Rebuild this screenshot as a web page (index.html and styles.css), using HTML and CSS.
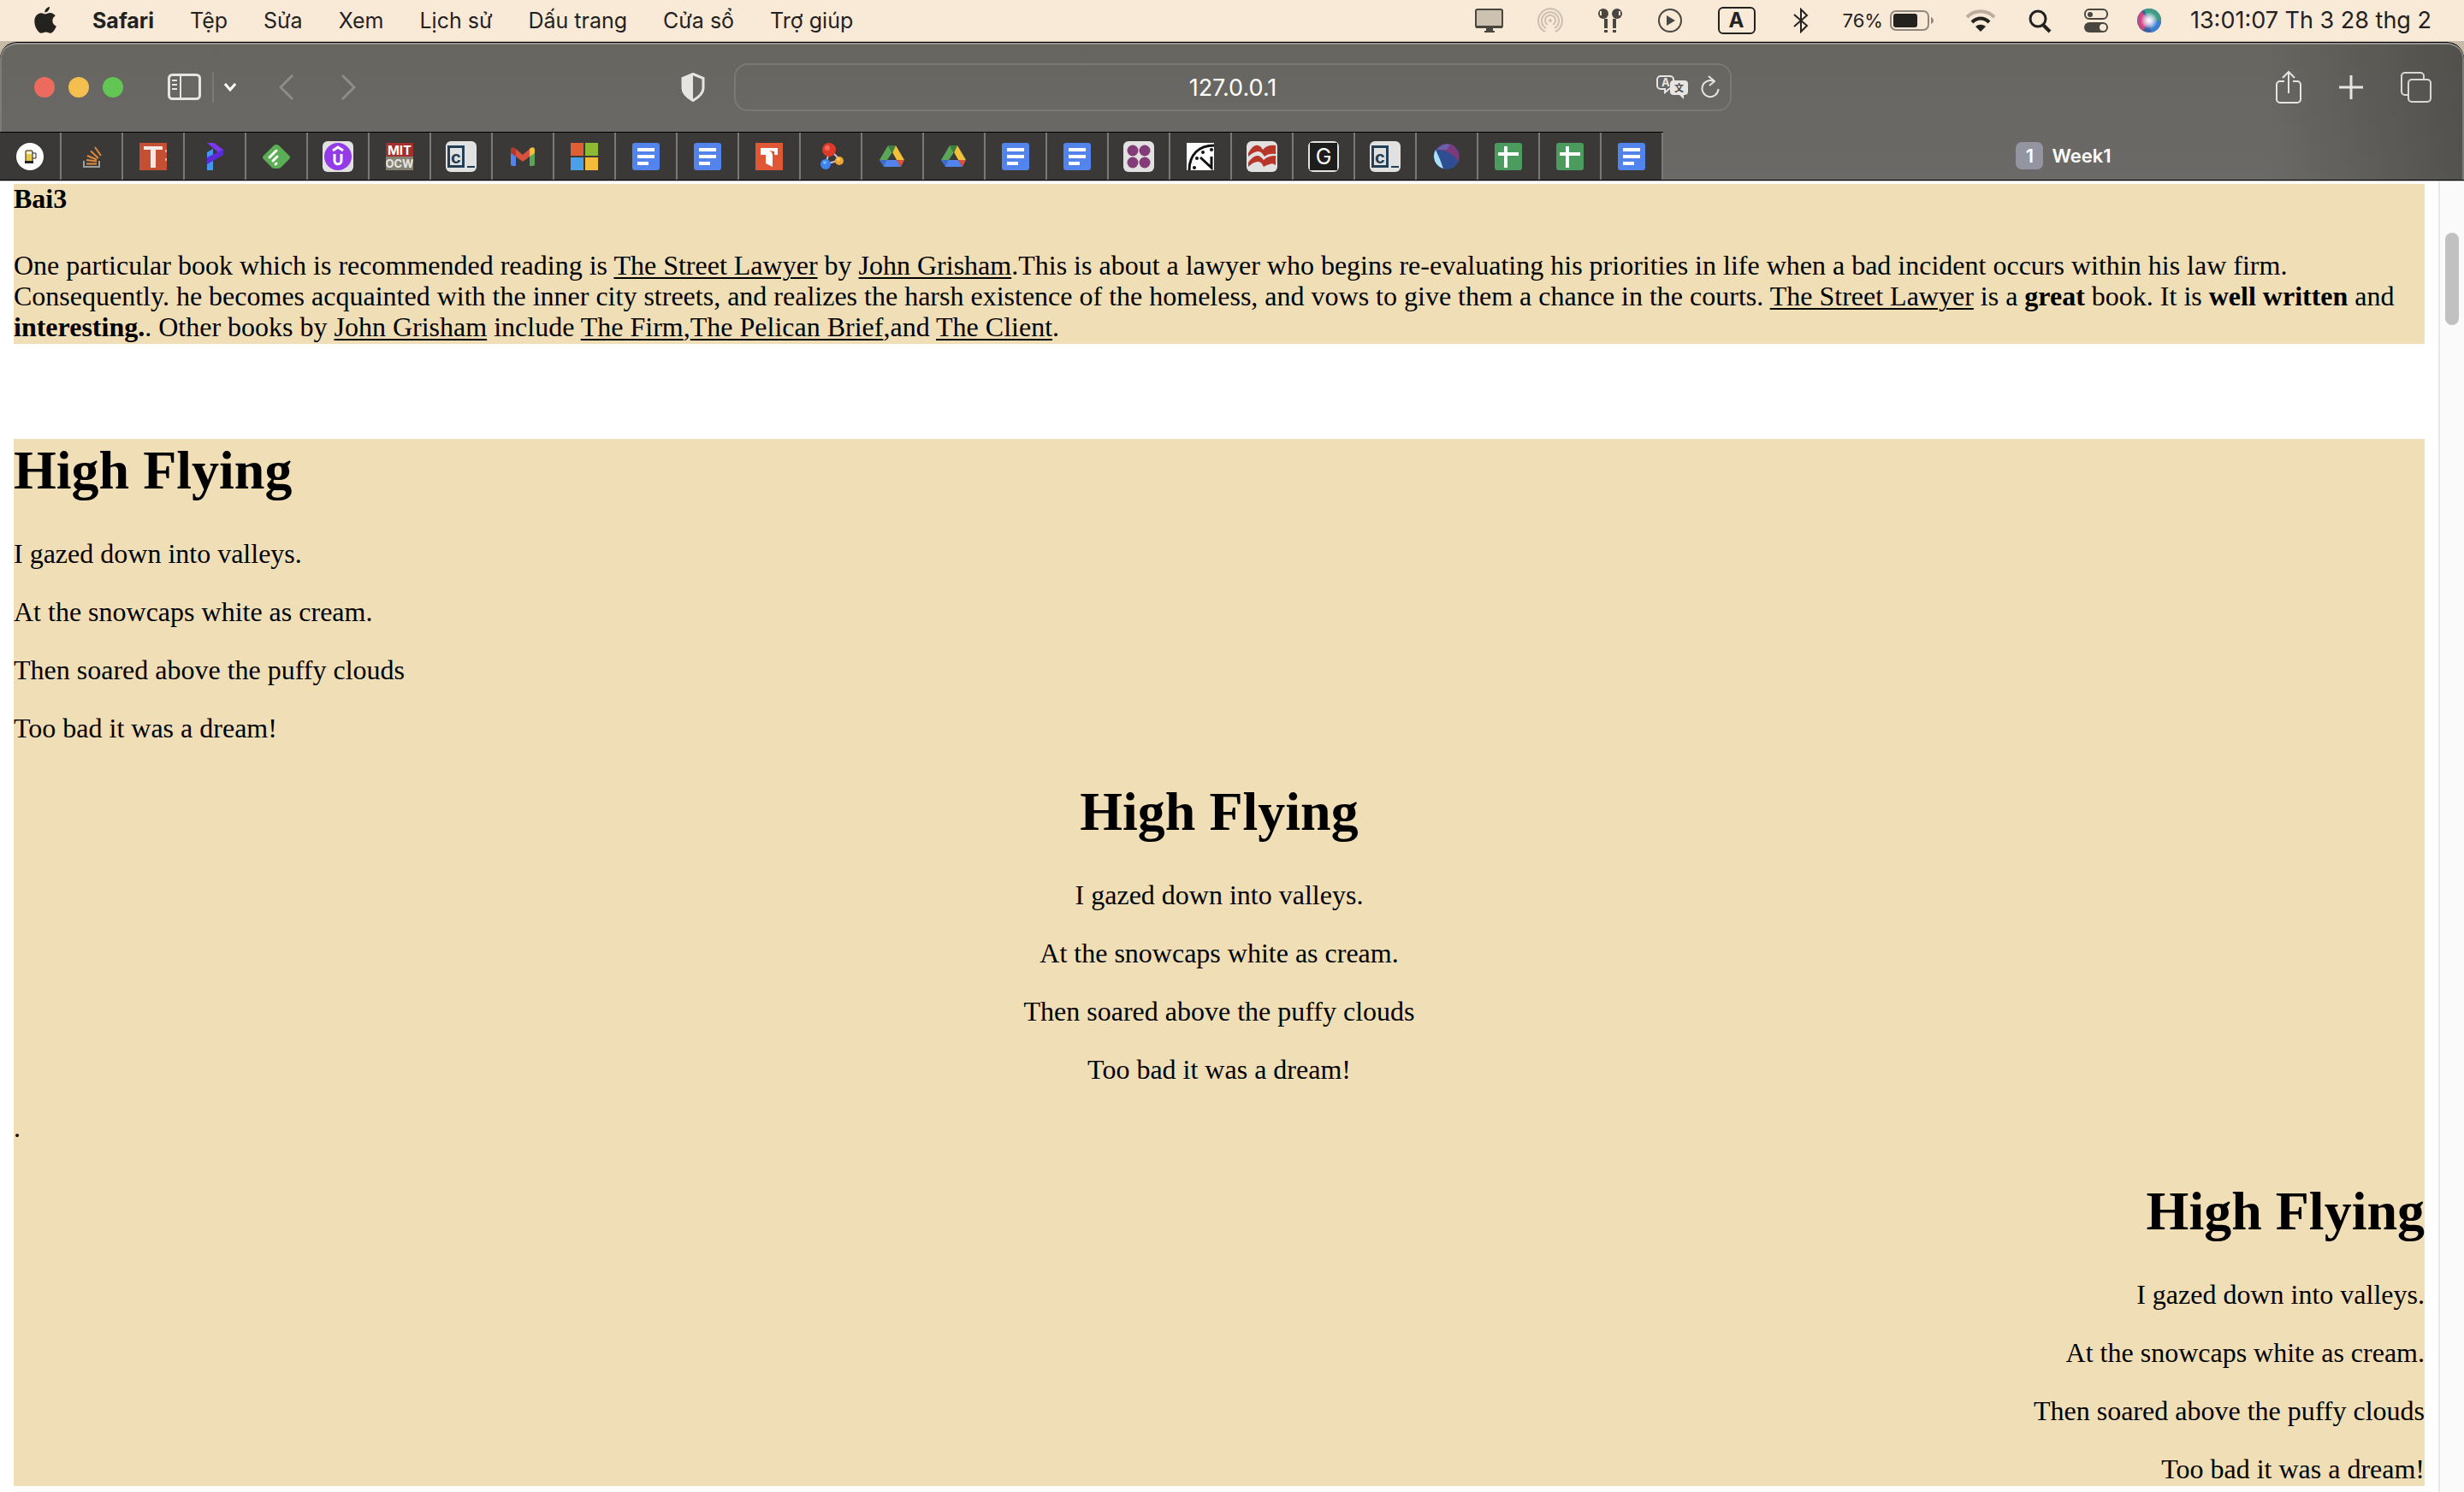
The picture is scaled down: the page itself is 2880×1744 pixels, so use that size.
FILE: index.html
```html
<!DOCTYPE html>
<html lang="vi">
<head>
<meta charset="utf-8">
<title>Week1</title>
<link rel="stylesheet" href="styles.css">
</head>
<body>
<svg class="sprite" aria-hidden="true">
  <symbol id="docs" viewBox="0 0 32 32"><rect width="32" height="32" rx="3" fill="#5383ec"/><path d="M6 6h20v4H6zM6 14h20v4H6zM6 22h13v4H6z" fill="#fff"/></symbol>
  <symbol id="sheets" viewBox="0 0 32 32"><rect width="32" height="32" rx="3" fill="#4b9a5e"/><path d="M11 4h4v25h-4zM4 11h24v4H4z" fill="#fff"/></symbol>
  <symbol id="drive" viewBox="0 0 32 32"><path d="M1 20 11 3l5 9-9 16z" fill="#5aa557"/><path d="M11 3h9l-4 9z" fill="#3c803f"/><path d="M20 3l10 17h-9L16 12z" fill="#f2c13c"/><path d="M1 20h9l-4 8z" fill="#3f6bd0"/><path d="M10 20h11l5 8H6z" fill="#5383ec"/><path d="M21 20h9l-4 8z" fill="#d9513f"/><path d="M10 20l6-9 5 9z" fill="#3a3937"/></symbol>
  <symbol id="console" viewBox="0 0 36 36"><rect width="36" height="36" rx="6" fill="#e1e1e1"/><path d="M3.500 6.500h17v23h-17z" fill="none" stroke="#233f56" stroke-width="3"/><path d="M25 29h9v2h-9z" fill="#233f56"/></symbol>
</svg>

<header class="menubar">
  <nav class="menus">
    <button class="apple" aria-label="Apple"><svg width="26" height="32" viewBox="0 0 26 32"><path d="M18 0c.3 3-2.600 6.700-5.700 6.500C12 3.600 14.800.400 18 0zM13 8.500c1.200 0 3-1.500 5.600-1.500 2.300 0 4.700 1.200 6.100 3.500-5 3-4.200 9.900 1.100 12-1.300 3.700-4 8.200-6.700 8.200-2 0-2.900-1.300-5.500-1.300s-3.600 1.300-5.500 1.300C4.800 30.700.300 23.500.300 17 .300 10.700 4.300 7.200 8 7.200c2.300 0 3.900 1.300 5 1.300z" fill="#23221f"/></svg></button>
    <button class="app-name">Safari</button>
    <button>Tệp</button>
    <button>Sửa</button>
    <button>Xem</button>
    <button>Lịch sử</button>
    <button>Dấu trang</button>
    <button>Cửa sổ</button>
    <button>Trợ giúp</button>
  </nav>
  <div class="status">
    <svg width="34" height="30" viewBox="0 0 34 30"><rect x="1" y="2" width="31" height="21" rx="2" fill="#cdc1b2" stroke="#4a4741" stroke-width="2"/><path d="M1 21h31v3H1zM13 24h8v3h2v2H11v-2h2z" fill="#4a4741"/></svg>
    <svg width="40" height="30" viewBox="-5 0 40 30" fill="none" stroke="#cbbfaf" stroke-width="2"><circle cx="15" cy="15" r="2" fill="#cbbfaf" stroke="none"/><path d="M12 20a6 6 0 1 1 6 0M10 24a10 10 0 1 1 10 0M9 28a14 14 0 1 1 12 0"/></svg>
    <svg width="32" height="30" viewBox="0 0 32 30" fill="#4a4741"><circle cx="8" cy="7" r="6"/><circle cx="24" cy="7" r="6"/><path d="M9 13h4v11H9zM19 13h4v11h-4zM9 26h4v3H9zM19 26h4v3h-4z"/><path d="M4 4h2v5H4zM26 4h2v5h-2z" fill="#f9ead8"/></svg>
    <svg width="40" height="30" viewBox="0 0 40 30"><circle cx="20" cy="15" r="13" fill="none" stroke="#4a4741" stroke-width="2"/><path d="M16 9l10 6-10 6z" fill="#4a4741"/></svg>
    <span class="input-source">A</span>
    <svg width="32" height="30" viewBox="0 0 32 30"><path d="M9 8l15 13-7 7V2l7 7L9 22" fill="none" stroke="#23221f" stroke-width="2"/></svg>
    <span class="battery"><span>76%</span><svg width="54" height="26" viewBox="0 0 54 26"><rect x="1" y="2" width="44" height="22" rx="6" fill="none" stroke="#8f887d" stroke-width="2"/><rect x="4" y="5" width="28" height="16" rx="3" fill="#23221f"/><path d="M48 9c4 2 4 6 0 8z" fill="#8f887d"/></svg></span>
    <svg width="36" height="30" viewBox="0 0 36 30" fill="none"><path d="M2 11c9-9 23-9 32 0" stroke="#bbae9f" stroke-width="4"/><path d="M8 17c6-6 14-6 20 0" stroke="#23221f" stroke-width="4"/><path d="M12 22c4-3 8-3 12 0l-6 6z" fill="#23221f"/></svg>
    <svg width="35" height="30" viewBox="0 0 35 30" fill="none" stroke="#23221f"><circle cx="15" cy="13" r="9" stroke-width="3"/><path d="M21 20l8 8" stroke-width="4"/></svg>
    <svg width="28" height="30" viewBox="0 0 28 30"><rect x="1" y="2" width="26" height="11" rx="5" fill="none" stroke="#4a4741" stroke-width="2"/><circle cx="7" cy="8" r="3" fill="#4a4741"/><rect y="17" width="28" height="12" rx="6" fill="#4a4741"/><circle cx="22" cy="23" r="4" fill="#f9ead8"/></svg>
    <svg width="28" height="30" viewBox="0 0 28 30"><defs><radialGradient id="siri"><stop offset="0" stop-color="#fff"/><stop offset=".3" stop-color="#e6dcf4"/><stop offset="1" stop-color="#fff" stop-opacity="0"/></radialGradient></defs><circle cx="14" cy="15" r="14" fill="#3f5f9e"/><path d="M14 15L5 4.500a14 14 0 0 0 2 22z" fill="#d2457f"/><path d="M14 15L8 2.500a14 14 0 0 1 20 13z" fill="#3f9c86"/><path d="M14 15l14 0a14 14 0 0 1-12 14z" fill="#3a7fce"/><circle cx="14" cy="15" r="10" fill="url(#siri)"/></svg>
    <time>13:01:07 Th 3 28 thg 2</time>
  </div>
</header>

<div class="window">
  <div class="chrome">
    <div class="toolbar">
      <div class="tools-left">
        <div class="lights"><button class="light close" aria-label="Close"></button><button class="light minimise" aria-label="Minimise"></button><button class="light zoom" aria-label="Zoom"></button></div>
        <div class="sidebar-tools">
          <button aria-label="Sidebar"><svg width="40" height="32" viewBox="0 0 40 32" fill="none" stroke="#e6e5e3"><rect x="1.500" y="1.500" width="36" height="28" rx="4" stroke-width="3"/><path d="M15 2v28" stroke-width="2"/><path d="M5 8h6M5 13h6M5 18h6" stroke-width="2"/></svg></button>
          <span class="rule"></span>
          <button aria-label="Tab groups"><svg width="14" height="12" viewBox="0 0 14 12"><path d="M1 2l6 7 6-7" fill="none" stroke="#fff" stroke-width="3"/></svg></button>
        </div>
        <div class="history">
          <button aria-label="Back"><svg width="18" height="30" viewBox="0 0 18 30"><path d="M16 1L2 15l14 14" fill="none" stroke="#8d8c89" stroke-width="3"/></svg></button>
          <button aria-label="Forward"><svg width="18" height="30" viewBox="0 0 18 30"><path d="M2 1l14 14L2 29" fill="none" stroke="#8d8c89" stroke-width="3"/></svg></button>
        </div>
        <button class="shield" aria-label="Privacy report"><svg width="28" height="34" viewBox="0 0 28 34"><path d="M14 1.500l12 5V18c0 6-6 11-12 14.500C8 29 2 24 2 18V6.500z" fill="none" stroke="#e6e5e3" stroke-width="3"/><path d="M14 1L1 6v12c0 7 7 12 13 15z" fill="#e6e5e3"/></svg></button>
      </div>
      <div class="address">
        <input type="text" value="127.0.0.1" aria-label="Address">
        <div class="address-tools">
          <button aria-label="Translate"><svg width="38" height="28" viewBox="0 0 38 28"><path d="M16 15l-6 5v-4H5a4 4 0 0 1-4-4V5a4 4 0 0 1 4-4h11a4 4 0 0 1 4 4v2" fill="none" stroke="#e6e5e3" stroke-width="2"/><text x="6" y="13" class="glyph" font-size="13" fill="#e6e5e3">A</text><rect x="16" y="6" width="21" height="17" rx="4" fill="#e6e5e3"/><path d="M26 22h6v6z" fill="#e6e5e3"/><text x="21" y="19" class="glyph" font-size="11" fill="#4c4b49">文</text></svg></button>
          <button aria-label="Reload"><svg width="22" height="28" viewBox="0 0 22 28" fill="none" stroke="#e6e5e3" stroke-width="2"><path d="M20.500 16a9.500 9.500 0 1 1-5.500-9"/><path d="M9 1l7 6-6 5"/></svg></button>
        </div>
      </div>
      <div class="tools-right">
        <button aria-label="Share"><svg width="30" height="40" viewBox="0 0 30 40" fill="none" stroke="#e6e5e3" stroke-width="2"><path d="M10 13H5a4 4 0 0 0-4 4v17a4 4 0 0 0 4 4h20a4 4 0 0 0 4-4V17a4 4 0 0 0-4-4h-5M15 27V3M8 9l7-7 7 7"/></svg></button>
        <button aria-label="New tab"><svg width="28" height="28" viewBox="0 0 28 28"><path d="M14 0v28M0 14h28" stroke="#e6e5e3" stroke-width="3"/></svg></button>
        <button aria-label="Show tabs"><svg width="36" height="36" viewBox="0 0 36 36" fill="none" stroke="#d9d8d6" stroke-width="2"><rect x="9" y="9" width="26" height="26" rx="4"/><path d="M9 27H5a4 4 0 0 1-4-4V5a4 4 0 0 1 4-4h18a4 4 0 0 1 4 4v4"/></svg></button>
      </div>
    </div>
    <div class="tabs">
      <div class="pinned">
        <button aria-label="Beer"><svg width="32" height="32" viewBox="0 0 32 32"><circle cx="16" cy="16" r="16" fill="#fff"/><path d="M19 12h4v6h-4" fill="none" stroke="#222" stroke-width="1"/><rect x="11" y="9" width="8" height="14" rx="1" fill="#e8c64a" stroke="#222" stroke-width="1"/><path d="M12 10h6v3h-6z" fill="#f7f3df"/><path d="M10 21h10v3H10z" fill="#222"/></svg></button>
        <button aria-label="Stack Overflow"><svg width="32" height="32" viewBox="0 0 32 32" fill="none"><path d="M7 21v7h18v-7" stroke="#9a9c9e" stroke-width="2"/><path d="M10 24.500h12M10 20l12 1.500M11 15l11 4.500M15 9.500l9 8.500M20 5l7 10" stroke="#e08a3c" stroke-width="2"/></svg></button>
        <button aria-label="T"><svg width="32" height="32" viewBox="0 0 32 32"><path d="M0 0h32v32H0z" fill="#c44f33"/><path d="M5 4h22v4h-8v21h-6V8H5z" fill="#f6e7e2"/><path d="M30 8h2v3h-2zM30 18h2v3h-2z" fill="#e3a595"/></svg></button>
        <button aria-label="P"><svg width="32" height="32" viewBox="0 0 32 32"><path d="M7 11l7-4v25H7z" fill="#4497ee"/><path d="M7 0h8l11 8v6L20 11z" fill="#7c38f0"/><path d="M26 8v6L7 25v-8z" fill="#5b2bd8"/></svg></button>
        <button aria-label="Feedly"><svg width="32" height="32" viewBox="0 0 32 32"><path d="M13 3q3-2 6 0l12 12q2 2 0 4L21 29q-1 1-3 1h-4q-2 0-3-1L1 19q-2-2 0-4z" fill="#5bae54"/><path d="M8 17l8-8M12 21l5-5M15 25l1-1" stroke="#fff" stroke-width="3" stroke-linecap="round"/></svg></button>
        <button aria-label="Udemy"><svg width="36" height="36" viewBox="0 0 36 36"><rect width="36" height="36" rx="6" fill="#e1e1e1"/><circle cx="18" cy="18" r="16" fill="#943ae6"/><path d="M12 11l6-4 6 4M14 15v8c0 5 8 5 8 0v-8" fill="none" stroke="#fff" stroke-width="3"/></svg></button>
        <button aria-label="MIT OCW"><svg width="32" height="32" viewBox="0 0 32 32"><path d="M0 0h32v16H0z" fill="#a32e2c"/><path d="M0 16h32v16H0z" fill="#858274"/><text x="16" y="14" text-anchor="middle" class="glyph" font-size="15" fill="#fff">MIT</text><text x="16" y="29" text-anchor="middle" class="glyph" font-size="13" fill="#e8e6e0">OCW</text></svg></button>
        <button aria-label="Console"><svg width="36" height="36"><use href="#console"/><text x="6" y="26" class="glyph" font-size="20" fill="#233f56">c</text></svg></button>
        <button aria-label="Gmail"><svg width="32" height="32" viewBox="0 0 32 32"><path d="M2 10l6 5v12H4q-2 0-2-2z" fill="#5383ec"/><path d="M24 15l6-5v15q0 2-2 2h-4z" fill="#5aa557"/><path d="M8 7l8 7 8-7v9l-8 6-8-6z" fill="#d9513f"/><path d="M2 12V8c0-3 3-4 6-1v9z" fill="#b13a30"/><path d="M30 12V8c0-3-3-4-6-1v9z" fill="#f2c13c"/></svg></button>
        <button aria-label="Microsoft"><svg width="32" height="32" viewBox="0 0 32 32"><path d="M0 0h15v15H0z" fill="#df5e34"/><path d="M17 0h15v15H17z" fill="#8eb932"/><path d="M0 17h15v15H0z" fill="#4ba1e9"/><path d="M17 17h15v15H17z" fill="#f5bc3c"/></svg></button>
        <button aria-label="Docs"><svg width="32" height="32"><use href="#docs"/></svg></button>
        <button aria-label="Docs"><svg width="32" height="32"><use href="#docs"/></svg></button>
        <button aria-label="T"><svg width="32" height="32" viewBox="0 0 32 32"><path d="M0 0h32v32H0z" fill="#df5734"/><path d="M6 6h20v8h-6v14l-8-4V14H6z" fill="#fff"/><path d="M16 9l6 1v4h-2l-1-3z" fill="#df5734"/></svg></button>
        <button aria-label="Nodes"><svg width="32" height="32" viewBox="0 0 32 32"><path d="M15 8L10 25l17-5z" fill="none" stroke="#c8bce8" stroke-width="2"/><circle cx="14" cy="8" r="8" fill="#dd3a2a"/><circle cx="12" cy="6" r="3" fill="#ef6a5b"/><circle cx="10" cy="25" r="6" fill="#3d84ee"/><circle cx="9" cy="23" r="2" fill="#7db2f8"/><circle cx="26" cy="21" r="5" fill="#efa62e"/><circle cx="25" cy="19" r="2" fill="#f9cc6f"/></svg></button>
        <button aria-label="Drive"><svg width="32" height="32"><use href="#drive"/></svg></button>
        <button aria-label="Drive"><svg width="32" height="32"><use href="#drive"/></svg></button>
        <button aria-label="Docs"><svg width="32" height="32"><use href="#docs"/></svg></button>
        <button aria-label="Docs"><svg width="32" height="32"><use href="#docs"/></svg></button>
        <button aria-label="Circles"><svg width="36" height="36" viewBox="0 0 36 36"><rect width="36" height="36" rx="6" fill="#e1e1e1"/><g fill="#833c77"><circle cx="11" cy="11" r="6.500"/><circle cx="25" cy="11" r="6.500"/><circle cx="11" cy="25" r="6.500"/><circle cx="25" cy="25" r="6.500"/></g></svg></button>
        <button aria-label="Clock"><svg width="32" height="32" viewBox="0 0 32 32"><path d="M0 0h32v32H0z" fill="#fff"/><path d="M3 32C3 14 14 3 32 3" fill="none" stroke="#111" stroke-width="3"/><path d="M16 17l13 12V16" fill="none" stroke="#111" stroke-width="3"/><g fill="#111"><circle cx="9" cy="29" r="2"/><circle cx="12" cy="18" r="2"/><circle cx="19" cy="11" r="2"/><circle cx="29" cy="8" r="2"/></g></svg></button>
        <button aria-label="Waves"><svg width="36" height="36" viewBox="0 0 36 36"><rect width="36" height="36" rx="6" fill="#e1e1e1"/><g fill="#b73529"><path d="M2 14Q8 3 14 5q3 1 5 5 5-6 15-5v10q-8-1-13 3-4-7-8-6-6 1-11 6z"/><path d="M2 25q6-9 12-8 3 1 6 5 5-5 14-5v11q-4-3-7-1-4 1-7 3-3-7-7-6-5 0-11 6z"/></g></svg></button>
        <button aria-label="G"><svg width="36" height="36" viewBox="0 0 36 36"><rect width="36" height="36" rx="6" fill="#e1e1e1"/><path d="M2 2h32v32H2z" fill="#1d1d1d"/><text x="18" y="27" text-anchor="middle" class="glyph thin" font-size="25" fill="#fff">G</text></svg></button>
        <button aria-label="Console"><svg width="36" height="36"><use href="#console"/><text x="6" y="26" class="glyph" font-size="20" fill="#233f56">c</text></svg></button>
        <button aria-label="Sphere"><svg width="32" height="32" viewBox="0 0 32 32"><circle cx="16" cy="16" r="15" fill="#2f4d92"/><path d="M4 8A15 15 0 0 1 24 3l6 8 0 11Q20 8 4 8z" fill="#7a3a7c"/><path d="M4 8Q12 0 20 2l-4 6z" fill="#6a62a8"/><path d="M3 8q5 10 9 22A15 15 0 0 1 3 8z" fill="#a9e2f4"/></svg></button>
        <button aria-label="Sheets"><svg width="32" height="32"><use href="#sheets"/></svg></button>
        <button aria-label="Sheets"><svg width="32" height="32"><use href="#sheets"/></svg></button>
        <button aria-label="Docs"><svg width="32" height="32"><use href="#docs"/></svg></button>
      </div>
      <button class="active-tab"><span class="badge">1</span><span>Week1</span></button>
    </div>
  </div>

  <div class="viewport">
    <main class="page">
      <section class="block review">
        <h4>Bai3</h4>
        <p>One particular book which is recommended reading is <u>The Street Lawyer</u> by <u>John Grisham</u>.This is about a lawyer who begins re-evaluating his priorities in life when a bad incident occurs within his law firm. Consequently. he becomes acquainted with the inner city streets, and realizes the harsh existence of the homeless, and vows to give them a chance in the courts. <u>The Street Lawyer</u> is a <b>great</b> book. It is <b>well written</b> and <b>interesting.</b>. Other books by <u>John Grisham</u> include <u>The Firm</u>,<u>The Pelican Brief</u>,and <u>The Client</u>.</p>
      </section>
      <section class="block poems">
        <div class="poem">
          <h1>High Flying</h1>
          <p>I gazed down into valleys.</p>
          <p>At the snowcaps white as cream.</p>
          <p>Then soared above the puffy clouds</p>
          <p>Too bad it was a dream!</p>
        </div>
        <div class="poem centred">
          <h1>High Flying</h1>
          <p>I gazed down into valleys.</p>
          <p>At the snowcaps white as cream.</p>
          <p>Then soared above the puffy clouds</p>
          <p>Too bad it was a dream!</p>
        </div>
        <p>.</p>
        <div class="poem right">
          <h1>High Flying</h1>
          <p>I gazed down into valleys.</p>
          <p>At the snowcaps white as cream.</p>
          <p>Then soared above the puffy clouds</p>
          <p>Too bad it was a dream!</p>
        </div>
      </section>
    </main>
    <div class="scrollbar"><div class="thumb"></div></div>
  </div>
</div>
</body>
</html>
```
FILE: styles.css
```css
* { box-sizing: border-box; }
body {
  margin: 0;
  min-height: 100vh;
  display: flex;
  flex-direction: column;
  background: #c5b9a8;
  font-family: Inter, "Liberation Sans", sans-serif;
}
button {
  padding: 0;
  border: 0;
  background: none;
  color: inherit;
  font: inherit;
  display: flex;
  align-items: center;
  justify-content: center;
}
svg { display: block; flex: none; }
.sprite { position: absolute; width: 0; height: 0; }
.glyph { font-family: Inter, "Noto Sans CJK SC", sans-serif; font-weight: 700; }
.glyph.thin { font-weight: 400; }

/* System menu bar */
.menubar {
  height: 48px;
  padding: 0 38px 0 40px;
  display: flex;
  align-items: center;
  justify-content: space-between;
  background: #f9ead8;
  color: #23221f;
  font-size: 25px;
  line-height: 32px;
  white-space: nowrap;
}
.menus { display: flex; align-items: center; gap: 42px; padding-bottom: 1px; }
.app-name { font-weight: 700; }
.status { display: flex; align-items: center; gap: 34px; }
.status time { font-size: 27px; }
.input-source {
  width: 44px;
  height: 32px;
  margin: 0 2px;
  border: 2px solid #23221f;
  border-radius: 6px;
  font-size: 24px;
  font-weight: 700;
  line-height: 28px;
  text-align: center;
}
.battery { display: flex; align-items: center; gap: 8px; font-size: 22px; }

/* Browser window */
.window {
  flex: 1;
  display: flex;
  flex-direction: column;
  margin-top: 1px;
}
.chrome {
  border-top: 1px solid #000;
  border-radius: 20px 20px 0 0;
  background:
    linear-gradient(90deg, transparent 92%, rgba(60, 58, 54, .5) 100%),
    linear-gradient(#666560, #6b6a68);
  box-shadow: inset 0 2px #93928f, inset 2px 0 #7d7c79, inset -2px 0 #7d7c79;
}
.toolbar {
  height: 104px;
  padding: 0 38px 0 40px;
  display: grid;
  grid-template-columns: 1fr minmax(0, 1166px) 1fr;
  align-items: center;
}
.tools-left { display: flex; align-items: center; padding-right: 34px; }
.lights { display: flex; gap: 16px; }
.light { width: 24px; height: 24px; border-radius: 50%; }
.close { background: #ec6b5e; }
.minimise { background: #f4bf4f; }
.zoom { background: #62c554; }
.sidebar-tools { display: flex; align-items: center; gap: 12px; margin-left: 52px; }
.rule { width: 2px; height: 36px; background: #7b7a77; }
.history { display: flex; gap: 54px; margin-left: 50px; }
.shield { margin-left: auto; }
.address {
  height: 56px;
  display: grid;
  border: 2px solid #7a7976;
  border-radius: 16px;
}
.address > * { grid-area: 1 / 1; }
.address input {
  width: 100%;
  padding: 0;
  border: 0;
  background: none;
  color: #fff;
  font: 27px Inter, "Liberation Sans", sans-serif;
  text-align: center;
}
.address-tools {
  justify-self: end;
  display: flex;
  align-items: center;
  gap: 14px;
  padding-right: 12px;
}
.tools-right { display: flex; align-items: center; justify-content: flex-end; gap: 44px; }

.tabs {
  height: 57px;
  display: flex;
  border-bottom: 1px solid #000;
}
.pinned {
  display: flex;
  border-top: 1px solid #000;
  background: #3a3937;
}
.pinned button { width: 72px; border-right: 2px solid #7b7a77; }
.active-tab {
  flex: 1;
  gap: 10px;
  color: #fff;
  font-size: 22px;
  font-weight: 600;
}
.badge {
  width: 32px;
  height: 32px;
  border-radius: 7px;
  background: #9595a1;
  line-height: 32px;
}

/* Web page */
.viewport {
  flex: 1;
  display: flex;
  border-top: 1px solid #b9b9b9;
  background: #fff;
}
.page {
  flex: 1;
  padding: 3px 16px 6px;
  color: #000;
  font: 32px/36px "Liberation Serif", "Times New Roman", serif;
}
.block { background: #f0deb7; padding-bottom: 2px; }
.review { margin-bottom: 111px; }
h4 { margin: 0 0 43px; font-size: 32px; line-height: 34px; }
p { margin: 0; }
h1 { margin: 0 0 42px; font-size: 64px; line-height: 74px; }
.poem { display: flex; flex-direction: column; }
.poem p + p, .poem + p { margin-top: 32px; }
.poem + .poem, p + .poem { margin-top: 43px; }
.centred { text-align: center; }
.right { text-align: right; }
u { text-decoration-thickness: 2px; text-underline-offset: 3px; }
.scrollbar {
  width: 30px;
  padding: 60px 6px 0;
  border-left: 2px solid #e8e8e8;
  background: #fafafa;
}
.thumb { width: 16px; height: 108px; border-radius: 8px; background: #c1c1c1; }
```
